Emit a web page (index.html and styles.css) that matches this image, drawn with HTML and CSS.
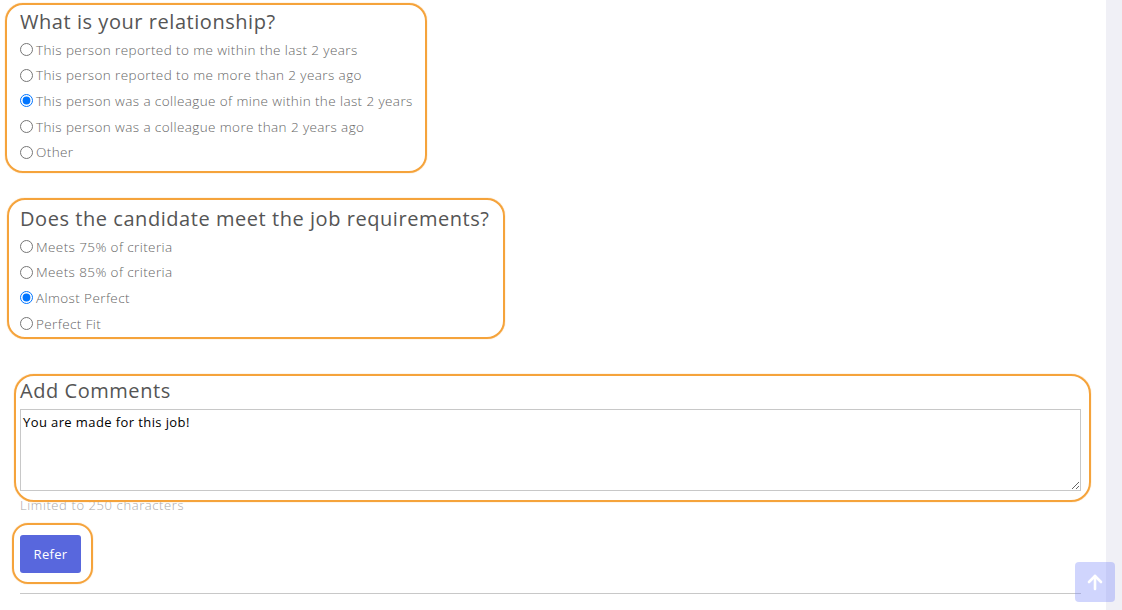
FILE: index.html
```html
<!DOCTYPE html>
<html lang="en">
<head>
<meta charset="utf-8">
<title>Referral</title>
<link rel="stylesheet" href="styles.css">
</head>
<body>
<div class="layout">
  <main class="page">
    <section class="question">
      <h2 class="q-title">What is your relationship?</h2>
      <label class="opt"><input type="radio" name="rel"><span>This person reported to me within the last 2 years</span></label>
      <label class="opt"><input type="radio" name="rel"><span>This person reported to me more than 2 years ago</span></label>
      <label class="opt"><input type="radio" name="rel" checked><span>This person was a colleague of mine within the last 2 years</span></label>
      <label class="opt"><input type="radio" name="rel"><span>This person was a colleague more than 2 years ago</span></label>
      <label class="opt"><input type="radio" name="rel"><span>Other</span></label>
    </section>

    <section class="question q2">
      <h2 class="q-title">Does the candidate meet the job requirements?</h2>
      <label class="opt"><input type="radio" name="req"><span>Meets 75% of criteria</span></label>
      <label class="opt"><input type="radio" name="req"><span>Meets 85% of criteria</span></label>
      <label class="opt"><input type="radio" name="req" checked><span>Almost Perfect</span></label>
      <label class="opt"><input type="radio" name="req"><span>Perfect Fit</span></label>
    </section>

    <section class="comments">
      <h2 class="q-title">Add Comments</h2>
      <textarea class="comment-box">You are made for this job!</textarea>
      <p class="hint">Limited to 250 characters</p>
    </section>

    <button class="refer" type="button">Refer</button>
    <hr class="rule">

    <div class="ring ring-1"></div>
    <div class="ring ring-2"></div>
    <div class="ring ring-3"></div>
    <div class="ring ring-4"></div>
  </main>
  <aside class="scroll-strip"></aside>
</div>
<a class="to-top" href="#">
  <svg width="18" height="18" viewBox="0 0 18 18" fill="none" stroke="#fff" stroke-width="2.6" stroke-linecap="round" stroke-linejoin="round"><path d="M9 16V3"/><path d="M3 9l6-6 6 6"/></svg>
</a>
</body>
</html>
```

FILE: styles.css
```css
* { box-sizing: border-box; }
html, body { margin: 0; padding: 0; height: 100%; overflow: hidden; }
body {
  font-family: "Open Sans", "Liberation Sans", sans-serif;
  background: #fff;
}
.layout {
  display: flex;
  height: 610px;
}
.page {
  position: relative;
  flex: 1;
  padding: 10px 25px 0 20px;
  background: #fff;
}
.scroll-strip {
  width: 16px;
  background: #f0f0f6;
}
.question { display: flex; flex-direction: column; }
.q2 { margin-top: 42px; }
.q-title {
  margin: 0 0 3px 0;
  font-size: 20px;
  line-height: 24px;
  font-weight: 500;
  color: #555;
  letter-spacing: 0.55px;
}
.opt {
  display: flex;
  align-items: center;
  height: 25.6px;
  font-size: 13.5px;
  font-weight: 300;
  color: #666;
  letter-spacing: 0.4px;
}
.opt input {
  margin: 0 3px 0 0;
  width: 13px;
  height: 13px;
}
.comments { margin-top: 42.6px; }
.comments .q-title { margin-bottom: 6px; }
.comment-box {
  display: block;
  width: 1061px;
  height: 82px;
  border: 1px solid #c8c8c8;
  padding: 3px 2px;
  font-family: inherit;
  font-size: 13px;
  line-height: 18px;
  letter-spacing: 0.4px;
  color: #000;
  resize: vertical;
  outline: none;
}
.hint {
  margin: 4px 0 0 0;
  font-size: 13px;
  line-height: 20px;
  font-weight: 300;
  letter-spacing: 0.6px;
  color: #aaa;
}
.refer {
  display: block;
  margin-top: 20px;
  width: 61px;
  height: 38px;
  border: 0;
  border-radius: 3px;
  background: #5867dd;
  color: #fff;
  font-family: inherit;
  font-size: 13px;
  letter-spacing: 0.3px;
  padding: 0;
}
.rule {
  margin: 20px 0 0 0;
  width: 1061px;
  border: 0;
  border-top: 1px solid #c8c8c8;
}
.ring {
  position: absolute;
  border: 2px solid #f5a33b;
  border-radius: 18px;
  box-shadow: 0 0 1px #f5a33b;
  pointer-events: none;
}
.ring-1 { left: 5px; top: 3px; width: 422px; height: 170px; }
.ring-2 { left: 7px; top: 198px; width: 498px; height: 141px; }
.ring-3 { left: 14px; top: 374px; width: 1077px; height: 128px; border-radius: 20px; }
.ring-4 { left: 12px; top: 523px; width: 81px; height: 61px; border-radius: 16px; }
.to-top {
  position: fixed;
  right: 7px;
  bottom: 8px;
  width: 40px;
  height: 40px;
  border-radius: 4px;
  background: rgba(120, 136, 250, 0.35);
  display: flex;
  align-items: center;
  justify-content: center;
}
```
